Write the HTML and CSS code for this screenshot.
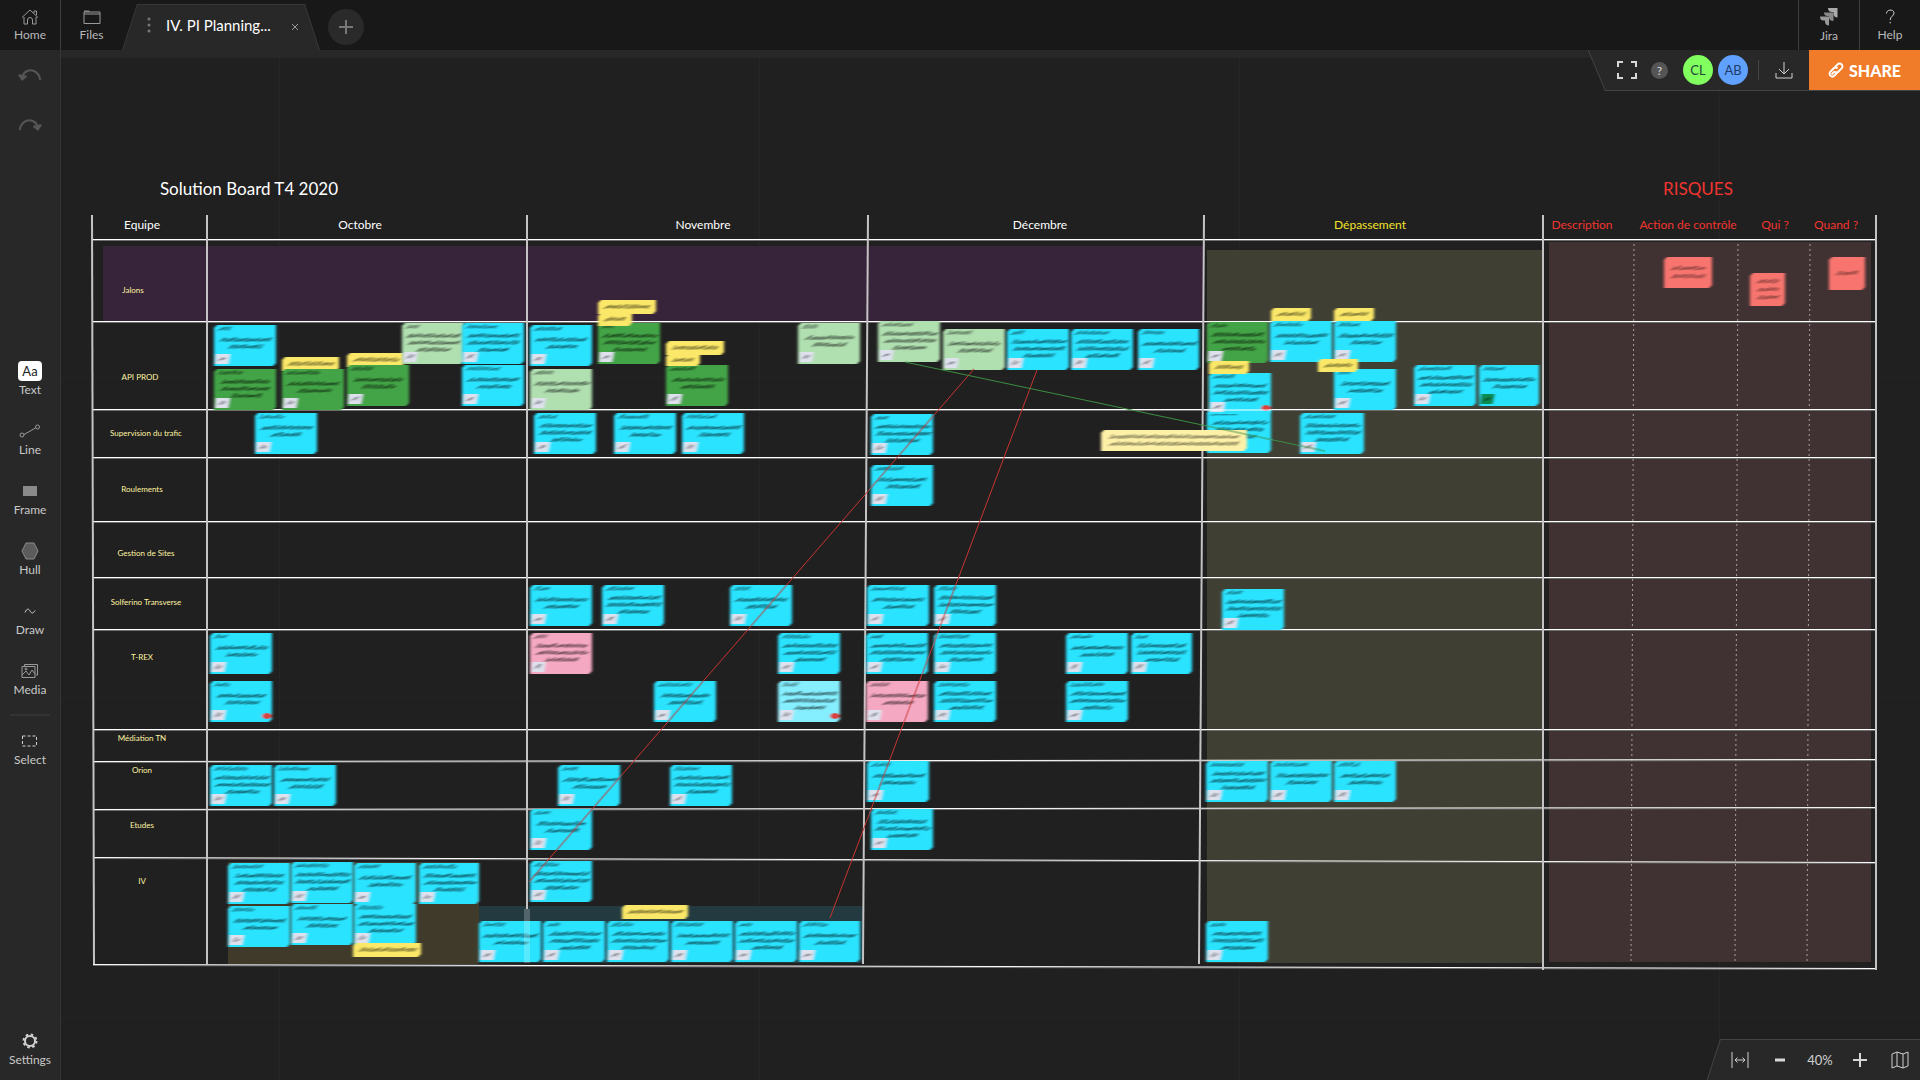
FILE: index.html
```html
<!DOCTYPE html>
<html lang="fr">
<head>
<meta charset="utf-8">
<title>IV. PI Planning</title>
<link rel="stylesheet" href="styles.css">
</head>
<body>
<header class="topbar">
  <button class="top-btn edge-right">
    <svg width="18" height="16" viewBox="0 0 18 16"><path d="M1 8.500L9 1l8 7.500M13 4V2h2.500v4M3 8v7h3.500v-4a2.500 2.500 0 0 1 5 0v4H15V8" /></svg>
    <span>Home</span>
  </button>
  <button class="top-btn">
    <svg width="18" height="16" viewBox="0 0 18 16"><path d="M1 3h16v11.500H1zM1 5h16" /><path d="M1 3V1.500h5L7 3z" class="solid" /></svg>
    <span>Files</span>
  </button>
  <div class="tab">
    <svg class="tab-dots" width="4" height="16" viewBox="0 0 4 16"><circle cx="2" cy="2" r="1.500"/><circle cx="2" cy="8" r="1.500"/><circle cx="2" cy="14" r="1.500"/></svg>
    <span class="tab-title">IV. PI Planning...</span>
    <button class="tab-close" aria-label="Close tab"><svg width="8" height="8" viewBox="0 0 8 8"><path d="M1 1l6 6M7 1l-6 6"/></svg></button>
  </div>
  <button class="tab-add" aria-label="New tab"><svg width="16" height="16" viewBox="0 0 16 16"><path d="M8 1v14M1 8h14"/></svg></button>
  <span class="spacer"></span>
  <button class="top-btn edge-left">
    <svg width="18" height="18" viewBox="0 0 18 18" class="filled"><path fill="#aaa" d="M8 0h9.500v9.500C15 9.500 13.500 8 13.500 5.500V4H12C9.500 4 8 2.500 8 0z"/><path fill="#888" d="M4 4.500h9.500V13C10.500 13 9 11.500 9 9.500V8H7.500C5 8 4 6.500 4 4.500z"/><path fill="#999" d="M0 8.500h9v9c-2.500 0-4-1.500-4-4V12.500H3.500C1 12.500 0 11 0 8.500z"/></svg>
    <span>Jira</span>
  </button>
  <button class="top-btn edge-left">
    <svg width="18" height="16" viewBox="0 0 18 16"><path class="bright" d="M5.500 4.500C5.500 0 13 0 13 4c0 3-3.800 3.500-3.800 7M9.200 12.800v1.600"/></svg>
    <span>Help</span>
  </button>
</header>

<div class="workspace">
  <nav class="sidebar">
    <div class="history">
      <button class="hist-btn" aria-label="Undo"><svg width="24" height="14" viewBox="0 0 24 14"><path d="M4 9C6 3 12 1 16 3c4 2 6 5 6 9"/><path class="solid" d="M0 7l2-1 3 2 3-1 1 2-5 4z"/></svg></button>
      <button class="hist-btn" aria-label="Redo"><svg width="24" height="14" viewBox="0 0 24 14"><path d="M20 9C18 3 12 1 8 3c-4 2-6 5-6 9"/><path class="solid" d="M24 7l-2-1-3 2-3-1-1 2 5 4z"/></svg></button>
    </div>
    <div class="tools">
      <button class="tool"><span class="icon"><span class="aa">Aa</span></span><span>Text</span></button>
      <button class="tool"><span class="icon"><svg width="22" height="14" viewBox="0 0 22 14"><path d="M5 10.500L16.500 4"/><circle cx="3" cy="11" r="2"/><circle cx="18.500" cy="3" r="2"/></svg></span><span>Line</span></button>
      <button class="tool"><span class="icon"><svg width="14" height="12" viewBox="0 0 14 12"><path class="solid" d="M0 1h14v10H0z"/></svg></span><span>Frame</span></button>
      <button class="tool"><span class="icon"><svg width="18" height="18" viewBox="0 0 18 18"><path class="hull" d="M5 1h8l4 8-4 8H5L1 9z"/></svg></span><span>Hull</span></button>
      <button class="tool"><span class="icon"><svg width="12" height="8" viewBox="0 0 12 8"><path class="bright" d="M1 5.500C3 1 4.500 1.500 6 4s3 3 5-.500"/></svg></span><span>Draw</span></button>
      <button class="tool"><span class="icon"><svg width="18" height="16" viewBox="0 0 18 16"><path d="M1 3.500h13v11H1zM3.500 3V1.500h13V12H15M1 12l4-4 3 4 3-5 3 4"/><circle cx="5" cy="6" r="1"/></svg></span><span>Media</span></button>
      <hr class="rule">
      <button class="tool"><span class="icon"><svg width="18" height="12" viewBox="0 0 18 12"><path class="bright" stroke-dasharray="3 2" d="M1.500 1h14v10h-14z"/></svg></span><span>Select</span></button>
    </div>
    <div class="settings">
      <button class="tool"><span class="icon"><svg width="18" height="18" viewBox="0 0 18 18"><circle class="bright gear" cx="9" cy="9" r="5"/><circle class="bright teeth" cx="9" cy="9" r="6.500" stroke-dasharray="2.500 2.600"/></svg></span><span>Settings</span></button>
    </div>
  </nav>

  <main class="canvas">
    <div class="canvas-strip"></div>
    <svg class="sheet" id="sheet" width="100%" height="100%" aria-hidden="true">
      <defs>
        <filter id="soft" x="-10%" y="-15%" width="120%" height="130%"><feGaussianBlur stdDeviation="1.400 0.600"/></filter>
        <clipPath id="over-notes"></clipPath>
      </defs>
    </svg>
    <div class="labels" id="labels"></div>

    <div class="sharebar">
      <button class="bar-btn" aria-label="Full screen"><svg width="20" height="18" viewBox="0 0 20 18"><path class="thick" d="M1 6V1h5M14 1h5v5M19 12v5h-5M6 17H1v-5"/></svg></button>
      <button class="help-dot" aria-label="Help">?</button>
      <span class="avatar green">CL</span>
      <span class="avatar blue">AB</span>
      <span class="sep"></span>
      <button class="bar-btn download" aria-label="Download"><svg width="18" height="18" viewBox="0 0 18 18"><path class="bright" d="M9 1v12M4 8l5 5 5-5M1 12v5h16v-5"/></svg></button>
      <button class="share">
        <svg width="16" height="16" viewBox="0 0 16 16"><path d="M6.500 9.500L3.600 12.400M7 5l2.600-2.600a2.600 2.600 0 0 1 4 4L10.500 9.500a2.600 2.600 0 0 1-4 0M9 11l-2.600 2.600a2.600 2.600 0 0 1-4-4L5.500 6.500a2.600 2.600 0 0 1 4 0"/></svg>
        SHARE
      </button>
    </div>

    <div class="zoombar">
      <button class="zoom-btn" aria-label="Fit width"><svg width="18" height="18" viewBox="0 0 18 18"><path class="bright" d="M1 1v16M17 1v16M4 9h10M6.500 6.500L4 9l2.500 2.500M11.500 6.500L14 9l-2.500 2.500"/></svg></button>
      <button class="zoom-btn" aria-label="Zoom out"><svg width="14" height="14" viewBox="0 0 14 14"><path class="heavy" d="M2 7h10"/></svg></button>
      <span class="zoom-value">40%</span>
      <button class="zoom-btn" aria-label="Zoom in"><svg width="14" height="14" viewBox="0 0 14 14"><path class="thick" d="M7 0v14M0 7h14"/></svg></button>
      <button class="zoom-btn" aria-label="Map"><svg width="18" height="18" viewBox="0 0 18 18"><path class="bright" d="M1 3l5-2 6 2 5-2v14l-5 2-6-2-5 2zM6 1v14M12 3v14"/></svg></button>
    </div>
  </main>
</div>
<script src="board.js"></script>
</body>
</html>
```

FILE: styles.css
```css
* { box-sizing: border-box; }

body {
  margin: 0;
  height: 100vh;
  display: flex;
  flex-direction: column;
  overflow: hidden;
  background: #202020;
  color: #b8b8b8;
  font-family: Lato, "Liberation Sans", sans-serif;
}

button {
  margin: 0;
  padding: 0;
  border: 0;
  background: none;
  color: inherit;
  font: inherit;
  cursor: pointer;
}

button svg { fill: none; stroke: #9a9a9a; }
svg .solid { fill: #8a8a8a; stroke: none; }
svg .bright { stroke: #d0d0d0; }
svg .thick { stroke: #d8d8d8; stroke-width: 2; }
svg .heavy { stroke: #d8d8d8; stroke-width: 3; }
svg .hull { fill: #5c5c5c; stroke: #8a8a8a; }
svg .gear { stroke-width: 2; }
svg .teeth { stroke-width: 2; }

/* Top bar */
.topbar {
  flex: none;
  height: 50px;
  display: flex;
  background: #181818;
}

.top-btn {
  width: 61px;
  display: flex;
  flex-direction: column;
  align-items: center;
  justify-content: center;
  gap: 2px;
  padding-top: 2px;
  font-size: 12px;
  line-height: 16px;
}
.top-btn svg.filled { stroke: none; }
.edge-right { border-right: 1px solid #3d3d3d; }
.edge-left { border-left: 1px solid #3d3d3d; }
.spacer { flex: 1; }

.tab {
  position: relative;
  width: 198px;
  margin: 4px 8px 0 0;
  padding: 0 19px 4px 25px;
  display: flex;
  align-items: center;
  isolation: isolate;
}
.tab::before,
.tab::after {
  content: "";
  position: absolute;
  z-index: -1;
  top: 0;
  bottom: 0;
  width: 51%;
  background: #282828;
  border-top: 1px solid #363636;
}
.tab::before { left: 0; border-left: 1px solid #363636; transform: skewX(-18deg); transform-origin: bottom; }
.tab::after { right: 0; border-right: 1px solid #363636; transform: skewX(18deg); transform-origin: bottom; }
.tab-dots { fill: #777; }
.tab-title {
  flex: 1;
  padding-left: 15px;
  color: #fff;
  font-size: 15px;
  white-space: nowrap;
}
.tab-close { display: flex; padding: 4px 2px 0; }
.tab-add {
  align-self: center;
  width: 36px;
  height: 36px;
  margin-top: 4px;
  display: grid;
  place-items: center;
  border-radius: 50%;
  background: #2a2a2a;
}
.tab-add svg { stroke: #777; stroke-width: 2; }

/* Workspace */
.workspace {
  flex: 1;
  min-height: 0;
  display: flex;
}

.sidebar {
  flex: none;
  width: 61px;
  display: grid;
  grid-template-rows: 1fr auto 1fr;
  background: #282828;
  border-right: 1px solid #343434;
}
.history { display: flex; flex-direction: column; }
.hist-btn { height: 50px; display: grid; place-items: center; }
.hist-btn svg { stroke: #555; stroke-width: 2; }
.hist-btn .solid { fill: #555; }

.tool {
  width: 100%;
  height: 60px;
  padding-top: 10px;
  display: flex;
  flex-direction: column;
  align-items: center;
  color: #c8c8c8;
  font-size: 12px;
  line-height: 16px;
}
.icon { height: 22px; display: grid; place-items: center; }
.aa {
  width: 24px;
  height: 20px;
  border-radius: 4px;
  background: #fff;
  color: #222;
  font-size: 13px;
  line-height: 20px;
}
.rule { height: 2px; margin: 4px 10px; border: 0; background: #333; }
.settings { align-self: end; }

/* Canvas */
.canvas {
  position: relative;
  flex: 1;
  min-width: 0;
  overflow: hidden;
  background: #202020;
}
.canvas-strip { height: 8px; background: #282828; }
.sheet { position: absolute; inset: 0; }
.labels { position: absolute; inset: 0; }

.label {
  position: absolute;
  transform: translate(-50%, -50%);
  margin: 0;
  font-weight: 400;
  line-height: 16px;
  white-space: nowrap;
}
.label.title { color: #fff; font-size: 17px; }
.label.risk-title { color: #f0352f; font-size: 17px; }
.label.head { color: #fff; font-size: 12px; }
.label.head-late { color: #f4e32c; font-size: 12px; }
.label.head-risk { color: #f0352f; font-size: 12px; }
.label.team { color: #fff3a0; font-size: 8px; }

/* Floating bars */
.sharebar,
.zoombar {
  position: absolute;
  right: 0;
  display: flex;
  align-items: center;
  isolation: isolate;
}
.sharebar::before,
.zoombar::before {
  content: "";
  position: absolute;
  z-index: -1;
  inset: 0;
  background: #282828;
  border-left: 1px solid #444;
}
.sharebar { top: 0; height: 40px; padding-left: 20px; }
.sharebar::before {
  right: -30px;
  bottom: -1px;
  left: 8px;
  border-bottom: 1px solid #444;
  transform: skewX(23deg);
  transform-origin: bottom;
}
.zoombar { bottom: 0; height: 41px; }
.zoombar::before {
  right: -30px;
  border-top: 1px solid #444;
  transform: skewX(-18deg);
  transform-origin: top;
}

.bar-btn { display: flex; }
.help-dot {
  width: 17px;
  height: 17px;
  margin: 0 15px 0 14px;
  border-radius: 50%;
  background: #555;
  color: #ddd;
  font-size: 12px;
  line-height: 17px;
}
.avatar {
  width: 30px;
  height: 30px;
  margin-right: 5px;
  border-radius: 50%;
  color: #24443a;
  font-size: 13px;
  line-height: 30px;
  text-align: center;
}
.avatar.green { background: #80ff5e; }
.avatar.blue { background: #60a0ff; color: #1f3c6a; }
.sep { width: 1px; height: 20px; margin: 0 16px 0 5px; background: #444; }
.download { margin-right: 16px; }
.share {
  width: 111px;
  height: 40px;
  display: flex;
  align-items: center;
  justify-content: center;
  gap: 5px;
  background: #f07b29;
  color: #fff;
  font-size: 16px;
  font-weight: 900;
}
.share svg { stroke: #fff; stroke-width: 2; }
.zoom-btn { width: 40px; height: 40px; display: grid; place-items: center; }
.zoom-value { width: 40px; color: #d0d0d0; font-size: 13px; text-align: center; }
```

FILE: board.js
```js
// Solution board: board coordinates include the top bar and the sidebar.
const OX = 61, OY = 50;
const NS = 'http://www.w3.org/2000/svg';
const sheet = document.getElementById('sheet');
const clip = document.getElementById('over-notes');

function add(parent, tag, attrs) {
  const el = document.createElementNS(NS, tag);
  for (const k in attrs) el.setAttribute(k, attrs[k]);
  parent.appendChild(el);
  return el;
}
const root = add(sheet, 'g', { transform: `translate(${-OX} ${-OY})` });
clip.setAttribute('clipPathUnits', 'userSpaceOnUse');

// Faint canvas grid
for (let x = 279; x < 4000; x += 480)
  add(root, 'path', { d: `M${x}.5 58V3000`, stroke: '#2b2b2b', 'stroke-dasharray': '1 1' });
for (let y = 377; y < 3000; y += 320)
  add(root, 'path', { d: `M61 ${y}.5H4000`, stroke: '#262626', 'stroke-dasharray': '1 1' });

// Shaded zones: x, y, width, height, colour
[
  [103, 246, 1101, 76, '#37233a'],
  [1207, 250, 336, 713, '#403f33'],
  [1549, 242, 322, 720, '#403132'],
  [228, 862, 251, 102, '#3f3a2a'],
  [479, 906, 384, 57, '#233a41']
].forEach(([x, y, width, height, fill]) => add(root, 'rect', { x, y, width, height, fill }));

// Dotted separators in the risk zone
[[1634, 1631], [1738, 1735], [1810, 1807]].forEach(([a, b]) =>
  add(root, 'path', { d: `M${a} 244L${b} 963`, stroke: '#aaa0a0', 'stroke-dasharray': '2 3' }));

// Table lines: x1, y1, x2, y2
const rows = [
  [92, 239, 1877, 239], [92, 321, 1877, 321], [92, 409, 1877, 409], [93, 457, 1877, 457],
  [93, 521, 1877, 521], [92, 577, 1877, 577], [93, 629, 1877, 629], [93, 729, 1877, 729],
  [93, 761, 1877, 759], [93, 809, 1877, 807], [93, 857, 1877, 862], [93, 964, 1877, 968]
];
rows.forEach(([x1, y1, x2, y2]) => {
  add(root, 'path', { d: `M${x1} ${y1 + 1.5}L${x2} ${y2 + 1.5}`, stroke: '#6e6e6e' });
  add(root, 'path', { d: `M${x1} ${y1 + 0.5}L${x2} ${y2 + 0.5}`, stroke: '#fff' });
});
[
  [92, 215, 94, 964], [207, 215, 207, 964], [527, 215, 527, 909], [868, 215, 863, 964],
  [1204, 215, 1199, 964], [1543, 215, 1543, 970], [1876, 215, 1876, 970]
].forEach(([x1, y1, x2, y2]) =>
  add(root, 'path', { d: `M${x1} ${y1}L${x2} ${y2}`, stroke: '#c4c2c2', 'stroke-width': 2 }));

const links = [
  [974, 369, 529, 882, '#c8342f'],
  [1037, 370, 830, 918, '#c8342f'],
  [905, 362, 1325, 451, '#3c8f42']
];
links.forEach(([a, b, c, d, stroke]) => add(root, 'path', { d: `M${a} ${b}L${c} ${d}`, stroke }));

// Notes
const COLORS = { b: '#2ae3ff', g: '#43a446', l: '#b0dfb0', p: '#f5a8c1', c: '#85efff', r: '#f7746e', y: '#fbe868', w: '#fdf1a8' };
let seed = 7;
const rnd = () => (seed = (seed * 16807) % 2147483647) / 2147483647;

// A line of handwriting: slanted strokes joined along the baseline
function scribble(g, cx, y, w, weight) {
  let d = `M${cx - w / 2} ${y + 2}`;
  for (let x = cx - w / 2; x < cx + w / 2 - 3; x += 3)
    d += `L${(x + 5 + rnd()).toFixed(1)} ${(y - 1 - rnd() * 2).toFixed(1)}L${(x + 3).toFixed(1)} ${(y + 1 + rnd()).toFixed(1)}`;
  add(g, 'path', { d, fill: 'none', stroke: '#000', 'stroke-opacity': weight, 'stroke-width': 1 });
}
function note(kind, x, y, w = 63, h = 41, mark) {
  const g = add(root, 'g', { filter: 'url(#soft)' });
  x += 1;
  w -= 1;
  add(g, 'path', { d: `M${x + 3} ${y}H${x + w}V${y + h - 3}L${x + w - 3} ${y + h}H${x}V${y + 3}z`, fill: COLORS[kind] });
  const cx = x + w / 2;
  if (kind === 'y') return scribble(g, cx, y + h / 2, w - 10, 0.45);
  if (kind === 'w') {
    scribble(g, cx, y + 7, w - 14, 0.4);
    return scribble(g, cx, y + 14, w - 14, 0.4);
  }
  if (kind === 'r') {
    const n = w > 40 ? 2 : x > 1800 ? 1 : 3;
    for (let i = 0; i < n; i++) scribble(g, cx, y + h / 2 + (i - (n - 1) / 2) * 8, w - 12, 0.35);
    return;
  }
  const title = 12 + rnd() * 24;
  scribble(g, x + 3 + title / 2, y + 4, title, 0.4);
  const n = rnd() > 0.500 ? 3 : 2;
  for (let i = 0; i < n; i++) scribble(g, cx, y + (n === 3 ? 13 : 15) + i * 7, (i === n - 1 ? 30 : 50) + rnd() * 6, 0.5);
  add(g, 'path', { d: `M${x + 2} ${y + 29}h14l-2 10h-13z`, fill: mark === 'green' ? '#0a8a50' : '#dfe2ee' });
  scribble(g, x + 8, y + 34, 9, 0.35);
  if (mark === 'red') add(g, 'ellipse', { cx: x + w - 5, cy: y + 35, rx: 5, ry: 3, fill: '#d8413c' });
  add(clip, 'rect', { x, y, width: w, height: h });
}

// kind, x, y, [width, height, mark]
[
  ['b', 213, 325], ['g', 213, 369], ['y', 281, 357, 58, 14], ['g', 281, 369], ['y', 346, 353, 58, 14], ['g', 346, 365],
  ['l', 401, 323], ['b', 461, 323], ['b', 461, 365],
  ['b', 529, 325], ['l', 529, 369], ['g', 597, 323], ['y', 597, 300, 59, 14], ['y', 597, 313, 35, 13],
  ['g', 665, 365], ['y', 665, 341, 59, 14], ['y', 665, 354, 35, 12], ['l', 797, 323],
  ['l', 877, 321], ['l', 942, 329], ['b', 1006, 329], ['b', 1070, 329], ['b', 1137, 329, 62],
  ['g', 1206, 322, 62], ['b', 1269, 321], ['b', 1333, 321], ['y', 1270, 308, 41, 13], ['y', 1333, 308, 41, 13],
  ['b', 1206, 410, 65, 43], ['b', 1208, 373, 63, 41, 'red'], ['y', 1208, 361, 41, 13],
  ['b', 1333, 369], ['y', 1317, 359, 41, 13], ['b', 1413, 365], ['b', 1478, 365, 61, 41, 'green'],
  ['b', 1299, 413, 65], ['w', 1100, 430, 147, 21],
  ['b', 254, 413], ['b', 533, 413], ['b', 613, 413], ['b', 681, 413], ['b', 870, 414], ['b', 870, 465],
  ['b', 529, 585], ['b', 601, 585], ['b', 729, 585], ['b', 866, 585], ['b', 933, 585], ['b', 1221, 589],
  ['b', 209, 633], ['p', 529, 633], ['b', 777, 633], ['b', 865, 633], ['b', 933, 633], ['b', 1065, 633], ['b', 1130, 633, 62],
  ['b', 209, 681, 63, 41, 'red'], ['b', 653, 681], ['c', 777, 681, 63, 41, 'red'], ['p', 865, 681], ['b', 933, 681], ['b', 1065, 681],
  ['b', 209, 765], ['b', 273, 765], ['b', 557, 765], ['b', 669, 765], ['b', 866, 761],
  ['b', 1205, 761], ['b', 1269, 761], ['b', 1333, 761],
  ['b', 529, 809], ['b', 870, 809], ['b', 529, 861],
  ['b', 227, 863], ['b', 290, 862], ['b', 353, 863], ['b', 418, 863, 61],
  ['b', 227, 906], ['b', 290, 904], ['b', 353, 904], ['y', 352, 943, 69, 14],
  ['b', 478, 921], ['b', 542, 921], ['b', 606, 921], ['b', 670, 921], ['b', 734, 921], ['b', 798, 921, 62],
  ['y', 621, 905, 67, 14], ['b', 1205, 921],
  ['r', 1663, 257, 49, 31], ['r', 1749, 273, 36, 33], ['r', 1828, 257, 37, 33]
].forEach(n => note(...n));

// Links stay faintly visible where they cross notes
const over = add(root, 'g', { 'clip-path': 'url(#over-notes)' });
links.forEach(([a, b, c, d, stroke]) =>
  add(over, 'path', { d: `M${a} ${b}L${c} ${d}`, stroke, 'stroke-opacity': 0.45, 'stroke-width': 2 }));
add(root, 'rect', { x: 524, y: 909, width: 6, height: 54, fill: '#fff', 'fill-opacity': 0.22 });
add(root, 'rect', { x: 1204, y: 409, width: 67, height: 2, fill: '#fff', 'fill-opacity': 0.500 });

// Text labels: class, centre x, centre y, text, element
const labels = [
  ['title', 249, 189, 'Solution Board T4 2020', 'h1'], ['risk-title', 1698, 189, 'RISQUES', 'h2'],
  ['head', 142, 225, 'Equipe'], ['head', 360, 225, 'Octobre'], ['head', 703, 225, 'Novembre'],
  ['head', 1040, 225, 'Décembre'], ['head-late', 1370, 225, 'Dépassement'],
  ['head-risk', 1582, 225, 'Description'], ['head-risk', 1688, 225, 'Action de contrôle'],
  ['head-risk', 1775, 225, 'Qui ?'], ['head-risk', 1836, 225, 'Quand ?'],
  ['team', 133, 290, 'Jalons'], ['team', 140, 377, 'API PROD'], ['team', 146, 433, 'Supervision du trafic'],
  ['team', 142, 489, 'Roulements'], ['team', 146, 553, 'Gestion de Sites'], ['team', 146, 602, 'Solferino Transverse'],
  ['team', 142, 657, 'T-REX'], ['team', 142, 738, 'Médiation TN'], ['team', 142, 770, 'Orion'],
  ['team', 142, 825, 'Etudes'], ['team', 142, 881, 'IV']
];
const layer = document.getElementById('labels');
labels.forEach(([cls, x, y, text, tag = 'span']) => {
  const el = document.createElement(tag);
  el.className = 'label ' + cls;
  el.textContent = text;
  el.style.left = x - OX + 'px';
  el.style.top = y - OY + 'px';
  layer.appendChild(el);
});
```
